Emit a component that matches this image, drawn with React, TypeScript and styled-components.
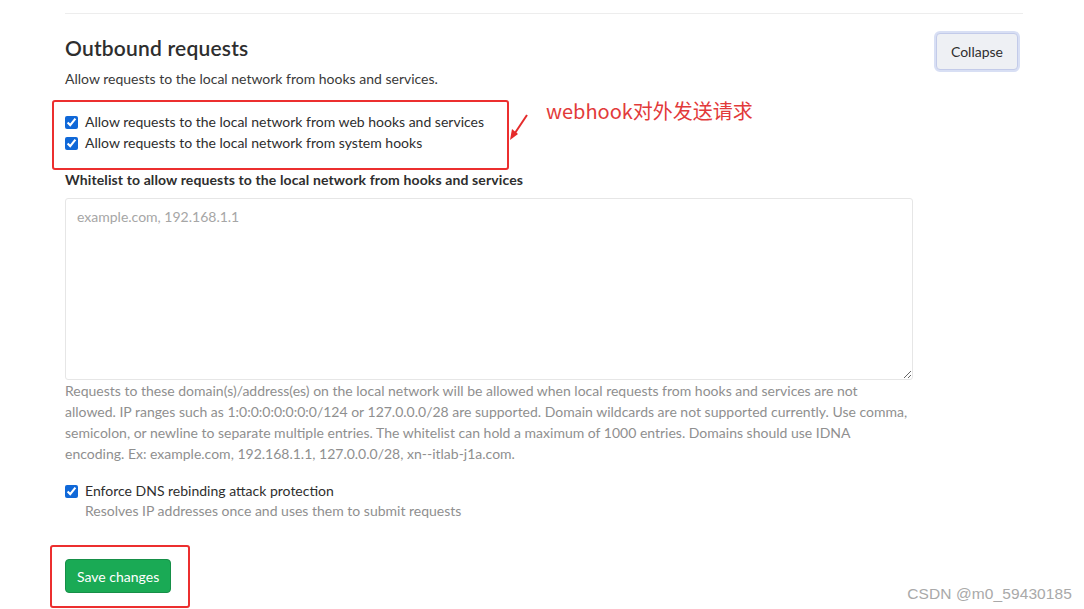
import React from "react";
import styled, { createGlobalStyle } from "styled-components";

const GlobalStyle = createGlobalStyle`
  body {
    margin: 0;
    background: #fff;
    font-family: Lato, "Noto Sans", "Liberation Sans", sans-serif;
    color: #2e2e2e;
  }
`;

const Page = styled.div`
  position: relative;
  width: 1084px;
  height: 609px;
  overflow: hidden;
  padding: 13px 61px 0 65px;
  box-sizing: border-box;
`;

const Section = styled.section`
  border-top: 1px solid #ededed;
  display: flex;
  flex-direction: column;
`;

const HeaderRow = styled.div`
  display: flex;
  justify-content: space-between;
  align-items: flex-start;
  padding-top: 19px;
  padding-right: 5px;
`;

const Title = styled.h4`
  margin: 2px 0 0;
  font-size: 21px;
  font-weight: 600;
  line-height: 26px;
  letter-spacing: 0.2px;
  color: #2e2e2e;
`;

const CollapseButton = styled.button`
  height: 37px;
  padding: 0 14px;
  font-family: inherit;
  font-size: 14px;
  color: #2e2e2e;
  background: #eef0f4;
  border: 1px solid #c3cbe9;
  border-radius: 4px;
  box-shadow: 0 0 0 2px #d8dff4;
`;

const Description = styled.p`
  margin: 8px 0 0;
  font-size: 14px;
  line-height: 20px;
  color: #3a3a3a;
`;

const CheckGroup = styled.div`
  position: relative;
  margin-top: 23px;
  display: flex;
  flex-direction: column;
  gap: 1px;
  width: fit-content;
`;

const CheckRow = styled.label`
  display: flex;
  align-items: center;
  gap: 7px;
  font-size: 14px;
  line-height: 20px;
  color: #2e2e2e;
`;

const Check = styled.input.attrs({ type: "checkbox" })`
  width: 13px;
  height: 13px;
  margin: 0;
  accent-color: #1068d8;
`;

const Highlight = styled.div<{ $inset: string }>`
  position: absolute;
  inset: ${(p) => p.$inset};
  border: 2px solid #ec2f2f;
  border-radius: 3px;
  pointer-events: none;
`;

const Note = styled.div`
  position: absolute;
  left: 546px;
  top: 96px;
  font-family: "Noto Sans CJK SC", "Noto Sans", sans-serif;
  font-size: 20px;
  line-height: 30px;
  color: #e23a3a;
`;

const Arrow = styled.svg`
  position: absolute;
  left: 506px;
  top: 112px;
`;

const FieldLabel = styled.label`
  display: block;
  margin-top: 17px;
  font-size: 14px;
  font-weight: 700;
  line-height: 20px;
  letter-spacing: 0.12px;
  color: #2e2e2e;
`;

const TextArea = styled.textarea`
  display: block;
  box-sizing: border-box;
  width: 848px;
  height: 182px;
  margin-top: 8px;
  padding: 8px 11px;
  font-family: inherit;
  font-size: 14px;
  line-height: 20px;
  border: 1px solid #e6e6e6;
  border-radius: 3px;
  resize: vertical;
  &::placeholder {
    color: #a6a6a6;
  }
`;

const HelpText = styled.p`
  margin: 0;
  font-size: 14px;
  line-height: 21px;
  color: #8f8f8f;
`;

const OptionBlock = styled.div`
  margin-top: 17px;
`;

const OptionHint = styled.div`
  padding-left: 20px;
  font-size: 14px;
  line-height: 20px;
  color: #8f8f8f;
`;

const SaveWrap = styled.div`
  position: relative;
  margin-top: 38px;
  width: fit-content;
`;

const SaveButton = styled.button`
  height: 34px;
  padding: 0 11px;
  font-family: inherit;
  font-size: 14px;
  color: #fff;
  background: #1aaa55;
  border: 1px solid #168f48;
  border-radius: 4px;
`;

const Watermark = styled.div`
  position: absolute;
  right: 12px;
  bottom: 6px;
  font-family: "Liberation Sans", sans-serif;
  font-size: 15.5px;
  letter-spacing: 0.1px;
  color: #a9a9a9;
`;

const App = () => {
  return (
    <>
      <GlobalStyle />
      <Page>
        <Section>
          <HeaderRow>
            <div>
              <Title>Outbound requests</Title>
              <Description>
                Allow requests to the local network from hooks and services.
              </Description>
            </div>
            <CollapseButton>Collapse</CollapseButton>
          </HeaderRow>

          <CheckGroup>
            <CheckRow>
              <Check defaultChecked />
              Allow requests to the local network from web hooks and services
            </CheckRow>
            <CheckRow>
              <Check defaultChecked />
              Allow requests to the local network from system hooks
            </CheckRow>
            <Highlight $inset="-12px -25px -17px -13px" />
          </CheckGroup>

          <FieldLabel htmlFor="whitelist">
            Whitelist to allow requests to the local network from hooks and
            services
          </FieldLabel>
          <TextArea id="whitelist" placeholder="example.com, 192.168.1.1" />
          <HelpText>
            Requests to these domain(s)/address(es) on the local network will be
            allowed when local requests from hooks and services are not
            <br />
            allowed. IP ranges such as 1:0:0:0:0:0:0:0/124 or 127.0.0.0/28 are
            supported. Domain wildcards are not supported currently. Use comma,
            <br />
            semicolon, or newline to separate multiple entries. The whitelist
            can hold a maximum of 1000 entries. Domains should use IDNA
            <br />
            encoding. Ex: example.com, 192.168.1.1, 127.0.0.0/28, xn--itlab-j1a.com.
          </HelpText>

          <OptionBlock>
            <CheckRow>
              <Check defaultChecked />
              Enforce DNS rebinding attack protection
            </CheckRow>
            <OptionHint>
              Resolves IP addresses once and uses them to submit requests
            </OptionHint>
          </OptionBlock>

          <SaveWrap>
            <SaveButton>Save changes</SaveButton>
            <Highlight $inset="-14px -19px -15px -15px" />
          </SaveWrap>
        </Section>

        <Note>webhook对外发送请求</Note>
        <Arrow width="26" height="30" viewBox="0 0 26 30">
          <path d="M21 3 L7 24" stroke="#e52b2b" strokeWidth="2" fill="none" />
          <path d="M4 28 L6 17 L12 22 Z" fill="#e52b2b" />
        </Arrow>
        <Watermark>CSDN @m0_59430185</Watermark>
      </Page>
    </>
  );
};

export default App;
